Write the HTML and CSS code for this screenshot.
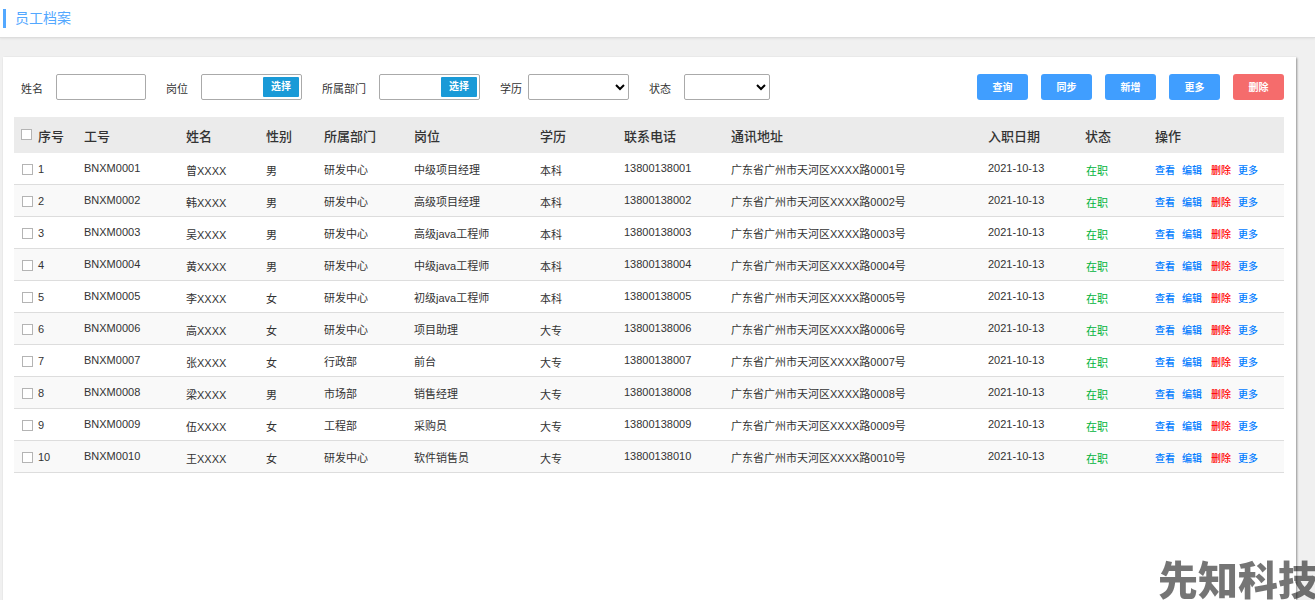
FILE: index.html
```
<!DOCTYPE html>
<html lang="zh-CN">
<head>
<meta charset="utf-8">
<title>员工档案</title>
<link rel="stylesheet" href="styles.css">
</head>
<body>
<header class="page-header"><h1 class="page-title">员工档案</h1></header>
<main class="panel">
  <form class="toolbar">
    <div class="filters">
      <div class="field"><label for="name">姓名</label><input class="control" id="name" type="text"></div>
      <div class="field"><label for="post">岗位</label><div class="control picker"><input id="post" type="text"><button type="button">选择</button></div></div>
      <div class="field"><label for="dept">所属部门</label><div class="control picker"><input id="dept" type="text"><button type="button">选择</button></div></div>
      <div class="field tight"><label for="edu">学历</label><select class="control wide" id="edu"><option></option><option>本科</option><option>大专</option></select></div>
      <div class="field"><label for="status">状态</label><select class="control" id="status"><option></option><option>在职</option></select></div>
    </div>
    <div class="actions">
      <button class="btn" type="button">查询</button>
      <button class="btn" type="button">同步</button>
      <button class="btn" type="button">新增</button>
      <button class="btn" type="button">更多</button>
      <button class="btn danger" type="button">删除</button>
    </div>
  </form>
  <table class="staff">
    <colgroup>
      <col class="c-index"><col class="c-code"><col class="c-name"><col class="c-sex"><col class="c-dept"><col class="c-post"><col class="c-edu"><col class="c-phone"><col class="c-address"><col class="c-date"><col class="c-status"><col class="c-ops">
    </colgroup>
    <thead>
      <tr><th><label class="pick"><input type="checkbox">序号</label></th><th>工号</th><th>姓名</th><th>性别</th><th>所属部门</th><th>岗位</th><th>学历</th><th>联系电话</th><th>通讯地址</th><th>入职日期</th><th>状态</th><th>操作</th></tr>
    </thead>
    <tbody id="rows"></tbody>
  </table>
</main>
<div class="watermark">先知科技</div>
<script src="app.js"></script>
</body>
</html>
```
FILE: styles.css
```
* { box-sizing: border-box; }

body {
  margin: 0;
  min-height: 100vh;
  display: flex;
  flex-direction: column;
  background: #f0f0f0;
  color: #333;
  font: 11px/16px "Liberation Sans", "Noto Sans CJK SC", sans-serif;
}

input, button, select { font: inherit; }

.page-header {
  display: flex;
  align-items: center;
  height: 38px;
  padding-left: 3px;
  background: #fff;
  border-bottom: 1px solid #ddd;
  box-shadow: 0 1px 2px rgba(0, 0, 0, .06);
}

.page-title {
  margin: 0;
  padding-left: 9px;
  border-left: 3px solid #53a8ff;
  color: #53a8ff;
  font-size: 14px;
  font-weight: 400;
  line-height: 19px;
}

.panel {
  flex: 1;
  margin: 19px 19px 0 3px;
  padding: 17px 12px 0 11px;
  background: #fff;
  box-shadow: 1px 1px 2px rgba(0, 0, 0, .4);
}

.toolbar {
  display: flex;
  justify-content: space-between;
  padding-left: 7px;
}

.filters { display: flex; gap: 20px; }
.field { display: flex; gap: 13px; }
.field.tight { gap: 6px; }
.field label { padding-top: 7px; white-space: nowrap; }

.control {
  width: 90px;
  height: 26px;
  border: 1px solid #aaa;
  border-radius: 2px;
  background: #fff;
}

.control.picker, .control.wide { width: 101px; }
select.control { width: 86px; color: #000; font-size: 13px; }

.picker { display: flex; padding: 2px; }
.picker input { flex: 1; min-width: 0; border: 0; padding: 0 2px; }
.picker button {
  width: 36px;
  height: 20px;
  padding: 0;
  border: 0;
  border-radius: 1px;
  background: #1a9ad7;
  color: #fff;
  font-size: 10px;
  font-weight: 700;
}

.actions { display: flex; gap: 13px; }
.btn {
  width: 51px;
  height: 26px;
  padding: 2px 0 0;
  border: 0;
  border-radius: 3px;
  background: #409eff;
  color: #fff;
  font-size: 10px;
  font-weight: 700;
}
.btn.danger { background: #f56c6c; }

.staff {
  width: 100%;
  margin-top: 17px;
  border-collapse: separate;
  border-spacing: 0;
  table-layout: fixed;
}

.c-index { width: 70px; }
.c-code { width: 102px; }
.c-name { width: 80px; }
.c-sex { width: 58px; }
.c-dept { width: 90px; }
.c-post { width: 126px; }
.c-edu { width: 84px; }
.c-phone { width: 107px; }
.c-date { width: 97px; }
.c-status { width: 70px; }
.c-ops { width: 129px; }

.staff th {
  height: 36px;
  padding: 4px 0 0;
  background: #ebebeb;
  font-size: 13px;
  font-weight: 500;
  text-align: left;
}

.staff td {
  height: 32px;
  padding: 2px 0 0;
  border-bottom: 1px solid #ddd;
  white-space: nowrap;
}

.staff tbody tr:nth-child(even) { background: #f9f9f9; }
.staff .latin { padding: 0 0 2px; }
.staff .low { padding-top: 4px; }
.staff .working { color: #00b43c; padding: 4px 0 0 1px; }

.pick { display: flex; align-items: center; gap: 5px; padding-left: 8px; }
td .pick { padding-bottom: 1px; }
th .pick { gap: 6px; padding-left: 7px; }
.pick input {
  appearance: none;
  width: 11px;
  height: 11px;
  margin: 0;
  border: 1px solid #b4b4b4;
  background: #fff;
}
th .pick input { margin-bottom: 5px; }
.pick input:checked { background: #409eff; }

.ops { display: flex; gap: 7px; padding-top: 2px; font-size: 10px; font-weight: 500; }
.ops a { color: #007bff; text-decoration: none; }
.ops a.remove { margin-left: 2px; color: #f00; }

.watermark {
  position: fixed;
  left: calc(100% - 157px);
  bottom: -3px;
  color: #000;
  font-size: 40px;
  font-weight: 900;
  line-height: 44px;
  white-space: nowrap;
  opacity: .54;
  pointer-events: none;
}
```
FILE: app.js
```
const staff = [
  ['曾', '男', '研发中心', '中级项目经理', '本科'],
  ['韩', '男', '研发中心', '高级项目经理', '本科'],
  ['吴', '男', '研发中心', '高级java工程师', '本科'],
  ['黄', '男', '研发中心', '中级java工程师', '本科'],
  ['李', '女', '研发中心', '初级java工程师', '本科'],
  ['高', '女', '研发中心', '项目助理', '大专'],
  ['张', '女', '行政部', '前台', '大专'],
  ['梁', '男', '市场部', '销售经理', '大专'],
  ['伍', '女', '工程部', '采购员', '大专'],
  ['王', '女', '研发中心', '软件销售员', '大专']
];

document.getElementById('rows').innerHTML = staff.map(([name, sex, dept, post, edu], i) => {
  const no = String(i + 1).padStart(4, '0');
  return `<tr>
    <td><label class="pick"><input type="checkbox">${i + 1}</label></td>
    <td class="latin">BNXM${no}</td>
    <td class="low">${name}XXXX</td>
    <td class="low">${sex}</td>
    <td>${dept}</td>
    <td>${post}</td>
    <td class="low">${edu}</td>
    <td class="latin">13800138${no.slice(1)}</td>
    <td>广东省广州市天河区XXXX路${no}号</td>
    <td class="latin">2021-10-13</td>
    <td class="working">在职</td>
    <td><div class="ops"><a href="#">查看</a><a href="#">编辑</a><a class="remove" href="#">删除</a><a href="#">更多</a></div></td>
  </tr>`;
}).join('');
```
